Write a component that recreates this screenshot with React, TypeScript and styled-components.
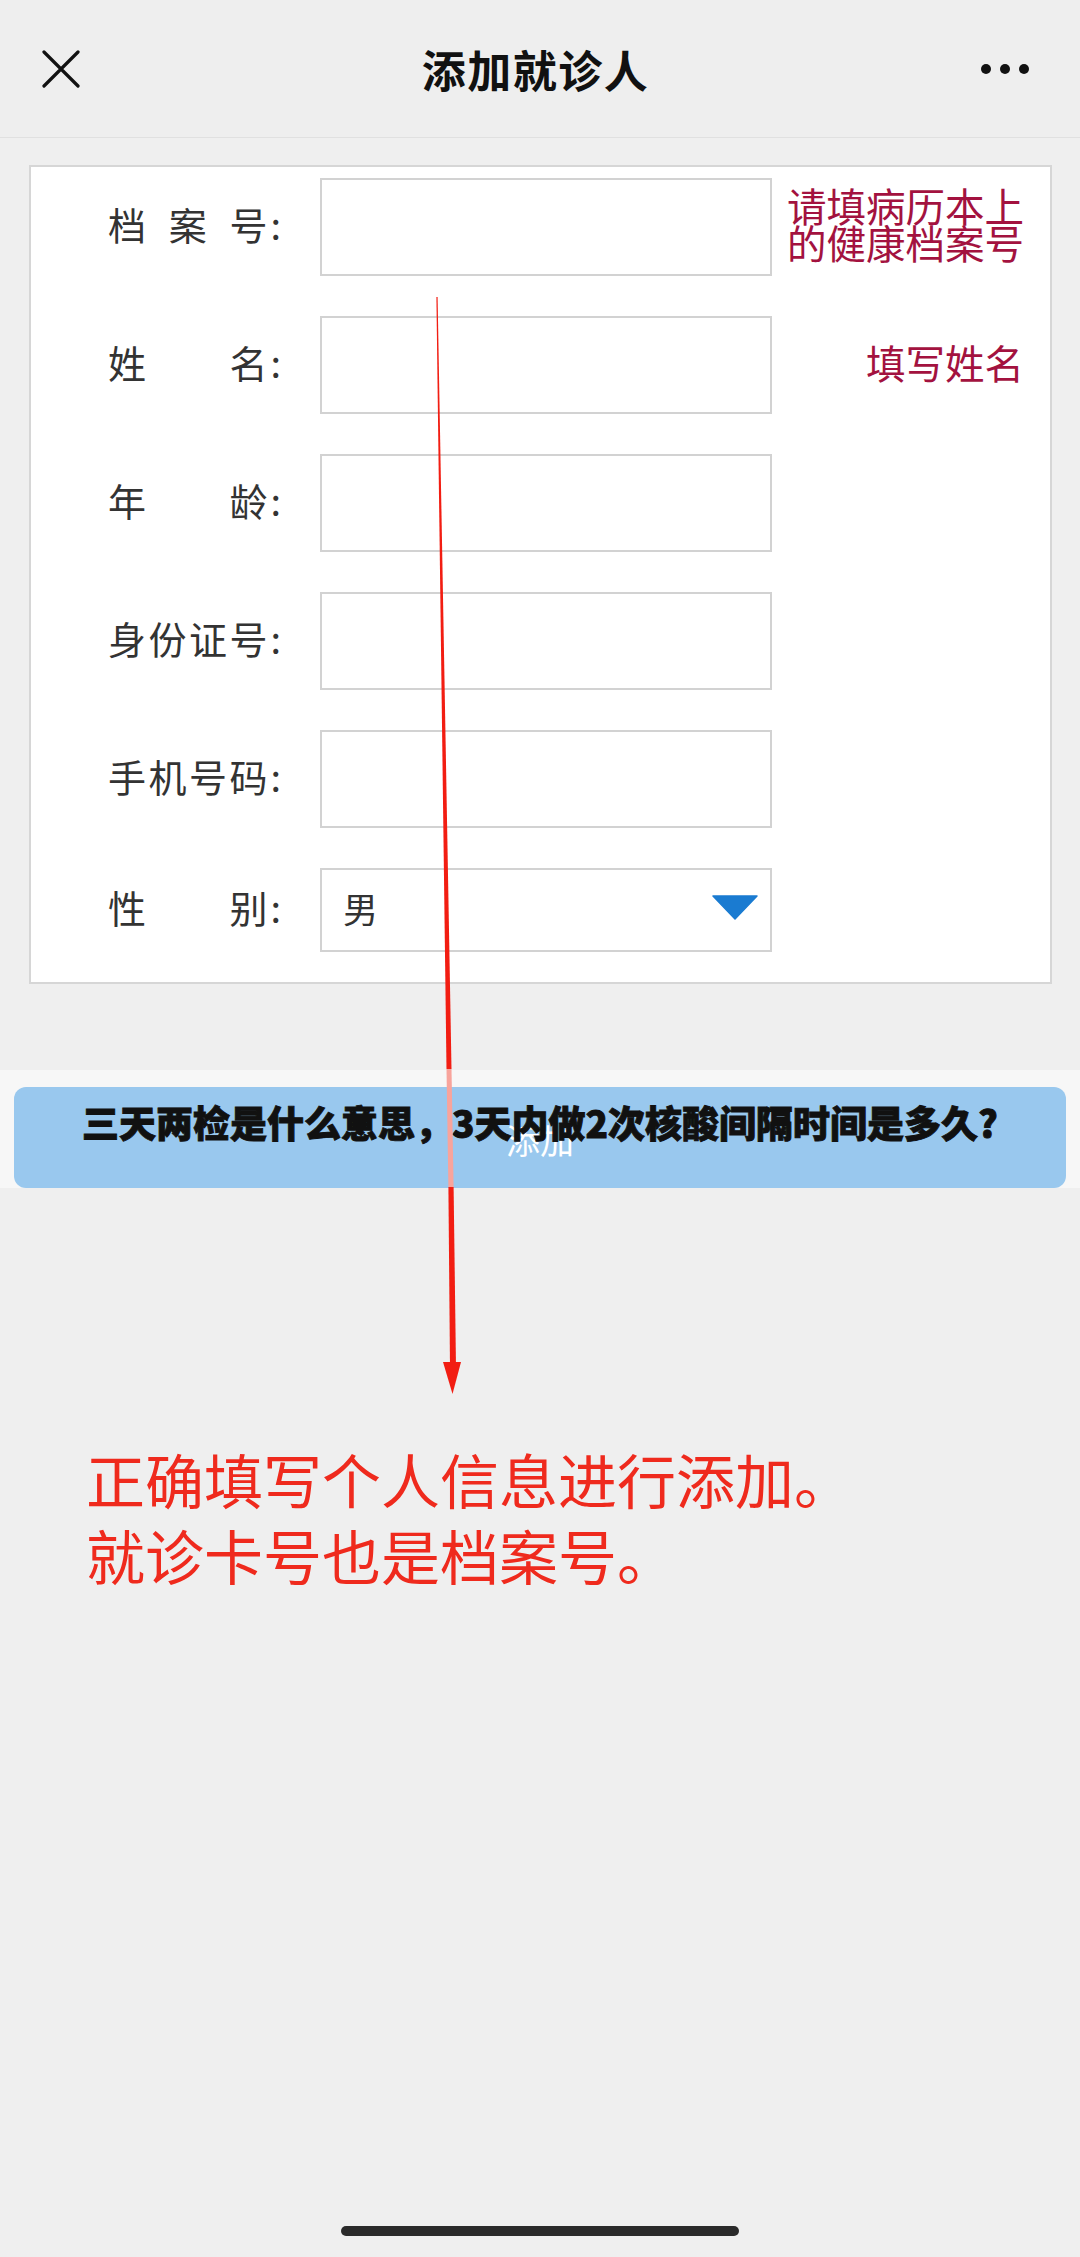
import React from "react";
import styled, { createGlobalStyle } from "styled-components";

const GlobalStyle = createGlobalStyle`
  html, body {
    margin: 0;
    padding: 0;
    background: #efefef;
  }
  * {
    box-sizing: border-box;
  }
`;

const FONT = `"Noto Sans CJK SC", "Noto Sans", sans-serif`;

interface FieldDef {
  label: string[];
  hint?: string[];
  select?: string;
}

const fields: FieldDef[] = [
  { label: ["档", "案", "号"], hint: ["请填病历本上", "的健康档案号"] },
  { label: ["姓", "名"], hint: ["填写姓名"] },
  { label: ["年", "龄"] },
  { label: ["身", "份", "证", "号"] },
  { label: ["手", "机", "号", "码"] },
  { label: ["性", "别"], select: "男" },
];

const App = () => {
  return (
    <Page>
      <GlobalStyle />
      <Header>
        <IconButton aria-label="close">
          <svg width="38" height="38" viewBox="0 0 38 38">
            <path d="M2 2 L36 36 M36 2 L2 36" stroke="#111" strokeWidth="3.2" strokeLinecap="round" fill="none" />
          </svg>
        </IconButton>
        <Title>添加就诊人</Title>
        <IconButton aria-label="more">
          <svg width="50" height="12" viewBox="0 0 50 12">
            <circle cx="5" cy="6" r="5" fill="#111" />
            <circle cx="24" cy="6" r="5" fill="#111" />
            <circle cx="43" cy="6" r="5" fill="#111" />
          </svg>
        </IconButton>
      </Header>

      <Card>
        {fields.map((f, i) => (
          <React.Fragment key={i}>
            <Label>
              <LabelChars>
                {f.label.map((c, j) => (
                  <span key={j}>{c}</span>
                ))}
              </LabelChars>
              <Colon>:</Colon>
            </Label>
            {f.select ? (
              <SelectBox>
                <span>{f.select}</span>
                <svg width="46" height="25" viewBox="0 0 46 25">
                  <path d="M1 1 H45 L23 24 Z" fill="#1a7bd1" stroke="#1a7bd1" strokeWidth="1.5" strokeLinejoin="round" />
                </svg>
              </SelectBox>
            ) : (
              <InputBox />
            )}
            <Hint>
              {f.hint?.map((h, j) => (
                <div key={j}>{h}</div>
              ))}
            </Hint>
          </React.Fragment>
        ))}
      </Card>

      <ButtonBand>
        <AddButton>
          添加
          <Headline>三天两检是什么意思，3天内做2次核酸间隔时间是多久?</Headline>
        </AddButton>
      </ButtonBand>

      <Note>
        正确填写个人信息进行添加。
        <br />
        就诊卡号也是档案号。
      </Note>

      <Spacer />
      <HomeBar />

      <Annotation width="1080" height="1400" viewBox="0 0 1080 1400">
        <polygon points="436.4,297 437.6,297 451.5,1069 446.5,1069" fill="#f21d12" />
        <polygon points="446.5,1069 451.5,1069 453.6,1187 448.4,1187" fill="#f8a49c" />
        <polygon points="448.4,1187 453.6,1187 456,1368 450,1368" fill="#f21d12" />
        <polygon points="443,1362 461,1362 452.5,1394" fill="#f21d12" />
      </Annotation>
    </Page>
  );
};

export default App;

const Page = styled.div`
  position: relative;
  width: 1080px;
  min-height: 2257px;
  display: flex;
  flex-direction: column;
  background: #efefef;
  font-family: ${FONT};
  overflow: hidden;
`;

const Header = styled.div`
  height: 138px;
  display: flex;
  align-items: center;
  justify-content: space-between;
  padding: 0 48px 0 35px;
  border-bottom: 1px solid #e0e0e0;
  background: #eeeeee;
`;

const IconButton = styled.div`
  display: flex;
  align-items: center;
  justify-content: center;
  width: 52px;
  height: 52px;
`;

const Title = styled.div`
  font-size: 44px;
  font-weight: 700;
  color: #111;
  letter-spacing: 1.5px;
  margin-left: 4px;
`;

const Card = styled.div`
  margin: 27px 28px 0 29px;
  background: #fff;
  border: 2px solid #d6d6d6;
  padding: 11px 26px 30px 79px;
  display: grid;
  grid-template-columns: 171px 452px 1fr;
  column-gap: 39px;
  row-gap: 40px;
  align-items: center;
`;

const Label = styled.div`
  display: flex;
  align-items: center;
  font-size: 38px;
  color: #333;
  line-height: 40px;
  margin-top: -6px;
  margin-left: -2px;
`;

const LabelChars = styled.div`
  flex: 1;
  display: flex;
  justify-content: space-between;
`;

const Colon = styled.span`
  margin-left: 3px;
`;

const InputBox = styled.div`
  height: 98px;
  border: 2px solid #d2d2d2;
  background: #fff;
`;

const SelectBox = styled.div`
  height: 84px;
  border: 2px solid #d2d2d2;
  background: #fff;
  display: flex;
  align-items: center;
  justify-content: space-between;
  padding: 0 12px 0 21px;
  font-size: 35px;
  color: #333;
  span {
    margin-top: -6px;
  }
  svg {
    margin-top: -6px;
  }
`;

const Hint = styled.div`
  justify-self: end;
  text-align: right;
  white-space: nowrap;
  margin-left: -40px;
  font-size: 39.5px;
  line-height: 37px;
  color: #a3123f;
  margin-top: -8px;
`;

const ButtonBand = styled.div`
  margin-top: 86px;
  background: #f7f7f7;
  padding: 17px 14px 0 14px;
`;

const AddButton = styled.div`
  position: relative;
  height: 101px;
  border-radius: 12px;
  background: #99c8ee;
  color: #fff;
  font-size: 34px;
  display: flex;
  align-items: center;
  justify-content: center;
  padding-top: 4px;
`;

const Headline = styled.div`
  position: absolute;
  top: 15px;
  left: 0;
  right: 0;
  text-align: center;
  font-size: 37px;
  line-height: 40px;
  font-weight: 900;
  color: #111;
  white-space: nowrap;
  -webkit-text-stroke: 0.9px #111;
`;

const Note = styled.div`
  margin: 253px 0 0 86px;
  font-size: 59px;
  line-height: 76px;
  color: #ef2a1d;
`;

const Spacer = styled.div`
  flex: 1;
`;

const HomeBar = styled.div`
  align-self: center;
  width: 398px;
  height: 10px;
  border-radius: 5px;
  background: #2a2a2a;
  margin-bottom: 21px;
`;

const Annotation = styled.svg`
  position: absolute;
  top: 0;
  left: 0;
  pointer-events: none;
  z-index: 5;
`;
